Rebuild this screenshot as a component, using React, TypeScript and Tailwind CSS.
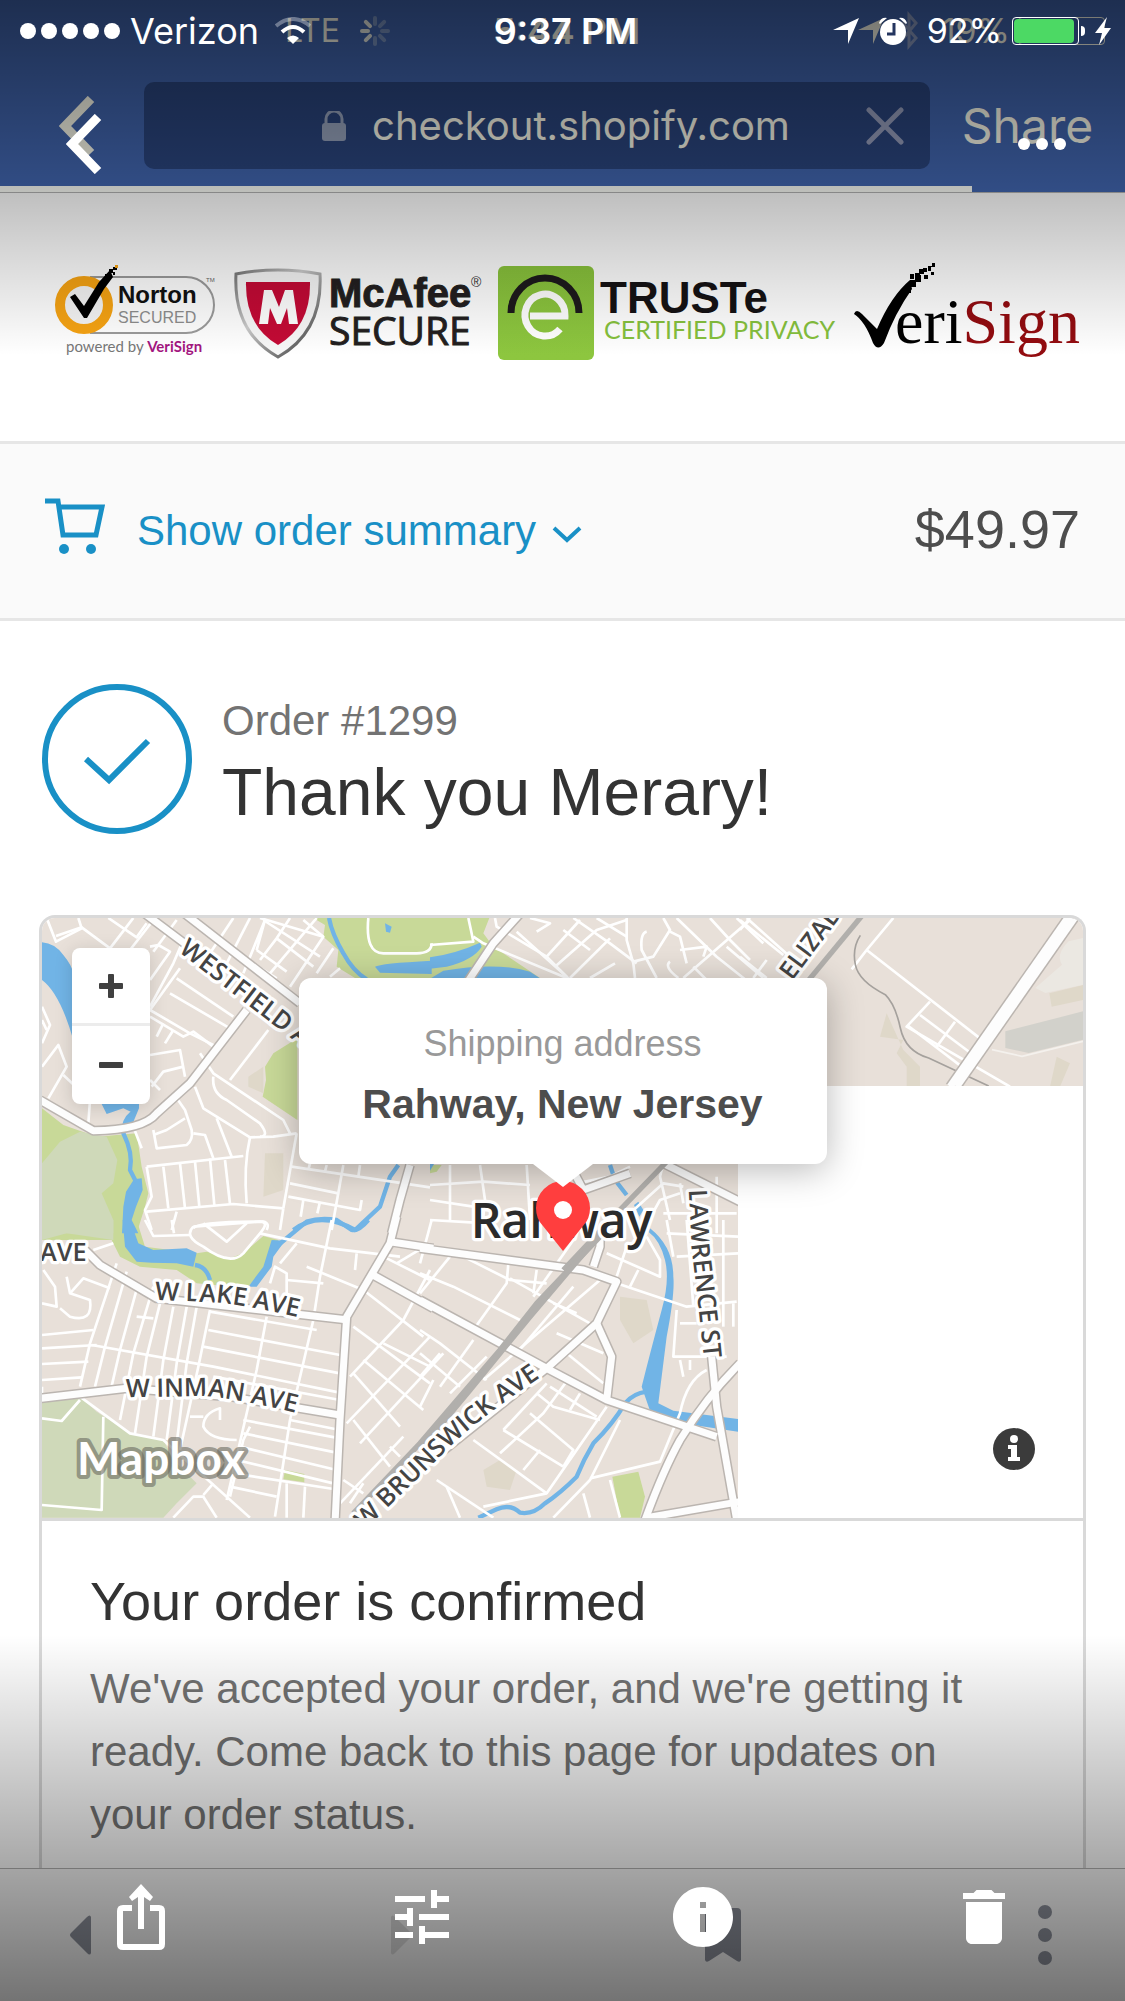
import React, { useState } from 'react';
import { MdDelete, MdInfo, MdTune } from 'react-icons/md';

interface MapArea {
  x: number;
  y: number;
  parks?: string[];
  woods?: string[];
  blocks?: string[];
  water?: string[];
  streams?: string[];
  streets?: string[];
  roads?: string[];
  rails?: string[];
}

// Map geometry, one entry per area; x and y place the area on the map.
const mapAreas: MapArea[] = [
  {
    x: -36,
    y: -54,
    parks: [
      'M850 54L885 75L880 110L925 150L920 200L975 234H1205V54z',
      'M802 415L730 460L705 500L708 540L698 590L802 660z',
      'M36 625L100 675L200 710L320 700L335 800L355 880L345 920L320 1000H36z',
    ],
    woods: ['M36 790L90 725L150 695L230 710L262 780L250 850L215 880L250 960V1000H36z'],
    blocks: ['M655 530L700 500V580L655 560z', 'M705 760H760V870L700 890z'],
    water: [
      'M36 127Q75 130 100 165Q125 195 130 220V420Q90 280 36 240z',
      'M213 608L230 642L280 625L302 635L285 680L300 690L327 625V600z',
      'M312 838L335 835L338 870L318 920L305 960L325 1000H276L280 920L288 875z',
      'M1035 200Q1050 190 1205 182V222L1050 218z',
      'M1065 70L1085 80L1080 98L1068 95z',
    ],
    streams: [
      'M305 640Q280 660 280 700Q310 760 300 810L318 845',
      'M897 54Q905 100 940 160Q970 215 1010 238',
      'M790 990Q870 930 975 990L1050 920L1080 830L1105 795',
    ],
    streets: [
      'M50 54L78 125L155 85L145 54', 'M78 108L155 82L240 145', 'M235 54L320 112L350 70', 'M240 145L310 54',
      'M300 150L370 60', 'M370 155L440 60', 'M360 140L385 135L420 155L360 240', 'M460 120L430 190L360 320',
      'M450 205L360 330L480 400L560 440', 'M440 235L610 350', 'M420 280L600 385', 'M360 350L460 410L490 395L550 440',
      'M400 370L380 410', 'M430 390L405 430', 'M360 465L450 450L465 530', 'M365 560L400 515L460 500', 'M360 540L390 570',
      'M540 160L610 54', 'M590 190L660 54', 'M640 220L705 60L680 150', 'M700 60L870 170', 'M680 150L770 215', 'M660 185L740 235',
      'M720 220L860 54', 'M780 260L880 110L820 60', 'M860 220L910 145', 'M740 115L850 200', 'M690 54L880 110', 'M900 230L930 205',
      'M780 54L740 115L690 180', 'M600 540L715 390', 'M510 460L550 520L760 660L780 700', 'M550 530Q545 580 590 600L690 670Q720 710 690 710',
      'M495 560L520 625L660 712L730 710L800 700', 'M560 655L605 770', 'M350 800L640 768', 'M660 712Q640 800 650 910',
      'M350 935L610 912L760 925', 'M350 800L365 890L345 930L365 990', 'M400 800L415 925', 'M450 790L465 925', 'M495 785L508 920', 'M540 775L553 915', 'M585 780L600 912',
      'M760 925L800 700', 'M440 935L425 990', 'M370 690L380 745L470 735Q490 720 485 690L465 630L430 580', 'M370 705L410 690L465 655', 'M490 700L525 705L550 775',
      'M310 680L335 745', 'M760 925L750 990', 'M785 800L1200 862', 'M780 850L925 880', 'M775 890L990 930L995 900', 'M940 795L905 990', 'M840 790L835 810', 'M890 795L885 815', 'M990 795L985 830', 'M820 900L812 950', 'M870 905L862 940',
      'M490 985Q500 965 700 965Q720 970 710 990', 'M36 320L60 375L36 430', 'M36 500L85 435L110 500L55 595', 'M100 525L180 600L175 670', 'M36 360L50 390',
      'M1015 54Q1005 160 1060 160H1160Q1205 160 1205 130',
    ],
    roads: ['M30 600L190 692Q340 690 380 640L480 550L650 330', 'M330 30L470 135L560 200', 'M450 30L810 310', 'M1140 795L1110 900L1085 1000'],
  },
  {
    x: 1164,
    y: -54,
    parks: ['M0 54H178L160 100L190 140L330 234H0z', 'M0 795H35L20 815L0 820z'],
    water: [
      'M0 172Q80 160 150 128L155 140Q130 180 50 200L0 206z',
      'M0 236L40 212Q200 185 300 215L332 236z',
      'M0 792H12L0 812z',
      'M612 915L625 905L640 930L628 950z',
    ],
    streams: ['M540 795L555 840L590 885'],
    streets: [
      'M115 54Q125 100 130 125L0 135', 'M130 110L160 130L410 234', 'M195 54L200 80L350 170L420 240', 'M260 95L410 230', 'M300 54L360 70L320 95',
      'M430 54L540 130L620 190', 'M350 170L450 60', 'M375 200L500 90L590 60', 'M400 90L480 150', 'M420 234L540 115', 'M590 54V120L610 190L615 234',
      'M500 54L590 110', 'M650 95Q630 100 635 150L680 234', 'M610 185L670 170L720 90L700 54', 'M720 95L750 110L770 190', 'M480 234L555 190', 'M720 185Q700 200 745 234',
      'M740 54L860 170L960 250', 'M750 150L830 140L820 170', 'M760 234L960 60', 'M840 54L900 120L960 180', 'M890 140L1000 234', 'M790 200L830 240', 'M920 54L1000 130',
      'M0 855L160 845L300 855', 'M150 795L165 900L160 950', 'M60 795V960', 'M0 960L135 968', 'M440 850L540 830L600 800', 'M700 790L690 830L720 960',
      'M600 940L700 850L760 860', 'M640 990L690 900L750 880', 'M750 850L760 910', 'M700 940H920', 'M860 830V1000', 'M0 900L130 920', 'M290 795L300 960',
    ],
    roads: ['M280 30L190 130L110 250', 'M420 795L460 870L600 820', 'M700 790L960 920'],
    rails: ['M715 780L560 940L400 1110'],
  },
  {
    x: 2094,
    y: -54,
    blocks: [
      'M440 340L420 410L490 420L470 460L500 500V560H540V500L490 450z',
      'M928 280L1030 255V300L935 320z',
      'M950 470L990 490L960 560H930z',
    ],
    streets: [
      'M0 60L130 165', 'M20 54L150 170', 'M0 170L80 234', 'M0 90L30 54', 'M40 234L80 180', 'M460 54L380 150L335 208',
      'M380 150L720 415', 'M570 305L500 380L810 560', 'M540 345L700 465', 'M505 378L665 500', 'M645 365L590 440',
    ],
    roads: ['M1020 30L650 560', 'M1000 30L630 560'],
    rails: ['M380 30L190 260'],
  },
  {
    x: -36,
    y: 906,
    parks: [
      'M36 0H320L345 80L500 100L530 95L600 115L640 100L700 48L745 60L700 150L650 205L500 190L440 150L330 140L270 110L245 60L36 60z',
      'M765 750L823 762V787L760 778z',
    ],
    woods: ['M36 0H250V60L110 40L36 60z', 'M36 545L155 535L200 575L300 640L400 660L430 720L500 790L440 850L400 893H36z'],
    water: [
      'M278 0H300L325 70L370 90L470 85L500 98L490 140L440 130L365 128L320 125L285 80z',
      'M655 200L700 140L725 60L765 62L730 110L725 140L680 200z',
    ],
    streams: ['M495 135Q530 140 540 180', 'M745 75L830 5Q870 -8 920 0L965 30Q985 35 1015 0'],
    streets: [
      'M345 0L370 48L480 45', 'M425 0L432 40', 'M490 20Q460 50 520 80Q600 140 640 100L690 40Q720 5 690 5L490 20',
      'M520 10L590 65L650 10', 'M690 40L900 85L1110 110', 'M905 0L870 170L850 300L780 600L735 890', 'M750 130L800 70', 'M720 190L735 140L770 160V230',
      'M770 180L880 190', 'M830 140L1000 210L1180 350', 'M980 100L975 150', 'M260 130L180 370L150 500', 'M290 155L225 380L195 500', 'M325 190L270 390L240 520', 'M370 200L310 400L270 600',
      'M390 250L350 410L315 640', 'M430 260L400 420L370 650', 'M470 260L440 430L410 660', 'M500 260L470 430L440 670', 'M540 270L505 440L450 690',
      'M185 375L550 440L940 520', 'M540 275L860 330', 'M535 330L930 405', 'M520 380L930 460', 'M710 290L680 450L590 840', 'M550 470L930 540',
      'M36 345L190 330', 'M36 385L200 375', 'M36 432L175 425', 'M36 480L155 472', 'M36 500V520', 'M320 290L370 295', 'M40 150L75 200L80 260L36 250',
      'M110 170L120 220L180 240Q190 310 120 290L90 265', 'M120 220L160 175L240 205', 'M190 90L250 70', 'M150 530L300 640L400 660L660 893', 'M36 595L95 603L150 540',
      'M220 590L215 870L36 855', 'M640 600L930 655', 'M640 640L930 700', 'M630 680L920 750', 'M620 720L910 790', 'M610 760L930 810', 'M600 800L740 830', 'M770 790L770 893', 'M825 800L820 893',
      'M430 893L490 830L520 830L560 893', 'M520 825L550 790', 'M570 600V565Q520 580 520 620Q540 660 620 660', 'M480 590H520', 'M660 620L640 660L600 830', 'M780 600L930 630',
      'M970 320L1200 490', 'M1000 420L1180 570', 'M970 460L1110 620', 'M970 600L1080 740', 'M960 470L1120 300L1200 150', 'M950 610L1200 350', 'M990 670L1240 400', 'M930 850L1120 650', 'M940 780L1000 820', 'M960 850L1000 790', 'M1080 680L1110 710', 'M1060 110L1200 180', 'M1100 130L1200 70', 'M1060 370L1200 440',
    ],
    roads: ['M165 90L210 135L380 235L560 255L955 300', 'M30 535L290 505L600 530L930 585', 'M1100 -10L1080 70L950 290L930 600L915 910', 'M1080 65L1210 85', 'M1020 160L1210 265'],
  },
  {
    x: 1134,
    y: 906,
    parks: ['M577 770L655 755L675 830L660 893H600z'],
    blocks: ['M190 750L240 720L290 750L270 810L200 800z', 'M600 230L680 240L700 330L640 370L600 300z'],
    water: ['M690 25Q760 80 760 170Q765 220 740 350L715 550L760 572L960 598V636L820 615L690 572L665 500Q690 400 725 270Q750 180 735 120Q720 60 685 35z'],
    streams: ['M680 515Q640 520 615 550Q580 610 520 670Q490 720 470 770Q420 820 375 850Q340 885 300 878Q270 850 230 868L175 893'],
    streets: [
      'M35 0L0 130', 'M0 160L100 200L300 300', 'M90 110L0 220', 'M130 110L270 180L380 190', 'M265 130L260 190L160 330', 'M350 150L340 220',
      'M270 175L510 310', 'M400 250L470 280', 'M460 200L290 400', 'M540 180L190 480', 'M410 340L550 400', 'M440 400L550 490', 'M560 100L720 170L720 120L680 50',
      'M620 80L590 170', 'M655 150L630 200', 'M590 190L800 260L950 245', 'M0 330L60 370L200 480', 'M0 400L120 500', 'M0 470L60 400', 'M60 500L160 360', 'M0 560L40 480', 'M90 520L200 410',
      'M450 470L370 580L240 700', 'M390 500L530 590', 'M380 490L250 630', 'M330 580L460 690L430 740', 'M350 520L400 560L540 600', 'M250 630L430 740', 'M160 660L380 820',
      'M560 560L380 820L190 860', 'M310 750L360 690', 'M480 520L450 570', 'M600 600L510 780L400 893', 'M510 775L720 725L780 580Q800 480 860 450', 'M570 780L600 893',
      'M50 780L220 893', 'M80 800L120 893', 'M490 820L510 893', 'M770 270L760 410H920', 'M780 310H830', 'M780 420L790 470', 'M810 420V450', 'M740 0L760 110', 'M740 40L954 50', 'M770 110L954 100', 'M800 0L820 260', 'M910 0V320', 'M940 250V320', 'M340 230L460 60',
    ],
    roads: [
      'M0 85L490 150L590 185L530 310L380 445L60 700', 'M520 140L540 80V30', 'M530 310L575 410L560 540', 'M0 240L380 445L560 540L890 650',
      'M875 410L890 560L950 900', 'M960 430Q860 530 780 660Q730 750 675 900', 'M680 893L960 845',
    ],
    rails: ['M540 50L350 250L240 390L0 670L-200 880', 'M500 90L330 290L150 510L0 690'],
  },
];

type Layer = 'parks' | 'woods' | 'blocks' | 'water' | 'streams' | 'streets' | 'roads' | 'rails';

const MapLayer = ({ layer, ...props }: { layer: Layer } & Omit<React.SVGProps<SVGGElement>, 'ref'>) => (
  <g {...props}>
    {mapAreas.map((area, i) => (
      <g key={i} transform={`translate(${area.x} ${area.y})`}>
        {area[layer]?.map((d) => <path key={d} d={d} />)}
      </g>
    ))}
  </g>
);

const StreetMap = () => (
  <svg viewBox="0 0 3123 1800" preserveAspectRatio="xMidYMid slice" className="block h-[600px] w-full" aria-label="Map of Rahway">
    <defs>
      <clipPath id="loaded"><path d="M0 0H3123V504H2088V1800H0z" /></clipPath>
      <path id="westfield" d="M408 100L740 355L850 440" />
      <path id="lake" d="M338 1145L530 1154Q640 1165 840 1215" />
      <path id="inman" d="M252 1438L480 1434Q620 1445 840 1505" />
      <path id="brunswick" d="M968 1836L1180 1630Q1300 1500 1580 1322" />
      <path id="lawrence" d="M1940 815L1950 1000Q1975 1200 1997 1440" />
      <path id="elizabeth" d="M2250 190L2430 -50" />
    </defs>
    <g clipPath="url(#loaded)" strokeLinejoin="round">
      <rect width="3123" height="1800" fill="#e8e0d9" />
      <MapLayer layer="parks" fill="#c8d998" />
      <MapLayer layer="woods" fill="#cfd9b9" />
      <MapLayer layer="blocks" fill="#dfd8c9" />
      <path d="M3080 70Q3040 110 3060 140L2980 210L3010 225L3123 200V60z" fill="#ebe8e2" />
      <path d="M2890 340L3123 280V365L2960 405L2890 390z" fill="#d2d1cb" />
      <path d="M2850 395L2940 415L3123 370" fill="none" stroke="#f4f1ed" strokeWidth="5" />
      <MapLayer layer="water" fill="#71b4e6" />
      <MapLayer layer="streams" fill="none" stroke="#71b4e6" strokeWidth="13" />
      <MapLayer layer="streets" fill="none" stroke="#fff" strokeWidth="8" />
      <path d="M2455 52Q2430 90 2440 140T2530 230Q2560 260 2575 330T2660 420L2840 504" fill="none" stroke="#a5a19d" strokeWidth="5" />
      <MapLayer layer="roads" fill="none" stroke="#bbb5b0" strokeWidth="30" />
      <MapLayer layer="roads" fill="none" stroke="#fdfdfd" strokeWidth="21" />
      <MapLayer layer="rails" fill="none" stroke="#b1afac" strokeWidth="16" />
      <g className="font-['Open_Sans',sans-serif] font-semibold" fontSize="76" fill="#444" stroke="#fff" strokeWidth="20" paintOrder="stroke">
        <text><textPath href="#westfield">WESTFIELD AVE</textPath></text>
        <text><textPath href="#lake">W LAKE AVE</textPath></text>
        <text><textPath href="#inman">W INMAN AVE</textPath></text>
        <text><textPath href="#brunswick">W BRUNSWICK AVE</textPath></text>
        <text><textPath href="#lawrence">LAWRENCE ST</textPath></text>
        <text><textPath href="#elizabeth">ELIZABETH</textPath></text>
        <text x="-6" y="1028">AVE</text>
        <text x="1286" y="961" fontSize="144" fill="#2b2b2b">Rahway</text>
      </g>
    </g>
  </svg>
);

const NortonBadge = () => (
  <svg viewBox="54 260 168 104" className="h-[104px]" aria-label="Norton Secured">
    <path d="M90 277H186A28 28 0 0 1 186 333H90" fill="none" stroke="#9b9b9b" strokeWidth="2" />
    <circle cx="84" cy="305" r="24" fill="#f4f4f4" stroke="#f6a313" strokeWidth="10" />
    <path d="M70 297L75 294L84 306L99 282L110 270L113 277L104 289L87 318H84z" />
    <path d="M105 274h4v4h-4zM109 269h4v4h-4zM113 272h2v3h-2zM113 267h4v3h-4z" />
    <path d="M115 265h3v3h-3z" fill="#f6a313" />
    <text x="118" y="303" className="font-['Liberation_Sans',sans-serif] font-bold" fontSize="24" fill="#111">Norton</text>
    <text x="118" y="323" className="font-['Liberation_Sans',sans-serif]" fontSize="16" fill="#8d8d8d">SECURED</text>
    <text x="206" y="282" className="font-['Liberation_Sans',sans-serif]" fontSize="6" fill="#666">TM</text>
    <text x="66" y="352" className="font-['Lato',sans-serif]" fontSize="15" fill="#777">
      powered by <tspan fill="#a3157f" className="font-bold">VeriSign</tspan>
    </text>
  </svg>
);

const McAfeeBadge = () => (
  <svg viewBox="236 260 250 104" className="h-[104px]" aria-label="McAfee Secure">
    <defs>
      <linearGradient id="steel" x1="0" x2="1" y1="0" y2="1">
        <stop offset="0" stopColor="#777" />
        <stop offset=".4" stopColor="#ccc" />
        <stop offset="1" stopColor="#333" />
      </linearGradient>
    </defs>
    <path d="M238 274Q280 266 322 274Q325 332 280 357Q235 332 238 274z" fill="#f7f7f7" stroke="url(#steel)" strokeWidth="3" />
    <path d="M248 282H312Q313 326 280 345Q247 326 248 282z" fill="#c40a35" />
    <path d="M261 324L266 290H274L281 307L287 290H295L300 324H291L289 308L283 324H279L272 308L270 324z" fill="#fff" />
    <text x="331" y="307" className="font-['Liberation_Sans',sans-serif] font-bold" fontSize="40" fill="#231f20" stroke="#231f20">McAfee</text>
    <text x="331" y="345" className="font-['Open_Sans',sans-serif]" fontSize="39" fill="#231f20" stroke="#231f20">SECURE</text>
    <text x="473" y="287" className="font-['Liberation_Sans',sans-serif]" fontSize="14" fill="#333">®</text>
  </svg>
);

const TrusteBadge = () => (
  <svg viewBox="496 260 344 104" className="h-[104px]" aria-label="TRUSTe Certified Privacy">
    <defs>
      <linearGradient id="leaf" x2="0" y2="1">
        <stop stopColor="#8ac43c" />
        <stop offset="1" stopColor="#8dc63f" />
      </linearGradient>
    </defs>
    <rect x="497" y="266" width="96" height="94" rx="6" fill="url(#leaf)" />
    <path d="M510 313A34 35 0 0 1 578 313" fill="none" stroke="#1d1a1c" strokeWidth="7" />
    <path d="M529 316H564A20 21 0 1 0 559 329" fill="none" stroke="#fff" strokeWidth="7" />
    <text x="599" y="313" className="font-['Liberation_Sans',sans-serif] font-bold" fontSize="44" fill="#151214">TRUSTe</text>
    <text x="603" y="339" className="font-['Lato',sans-serif]" fontSize="25" fill="#86c13d">CERTIFIED PRIVACY</text>
  </svg>
);

const VeriSignBadge = () => (
  <svg viewBox="854 260 228 104" className="h-[104px]" aria-label="VeriSign">
    <path d="M855 314Q857 308 863 314L878 329Q892 296 911 280L913 289Q896 313 885 343Q879 352 874 343Q866 321 855 314z" />
    <path d="M905 286h6v-6h5v-5h6v7h-5v5h-5v6h-6zM907 279h4v-5h4v5zM916 273h4v-4h5v5h-4v4h-5zM924 268h4v4h-4zM925 279h4v-4h-4zM929 266h4v-3h3v4h-4v4h-3zM932 272h3v3h-3z" />
    <text x="896" y="343" className="font-['Liberation_Serif',serif]" fontSize="64">
      eri<tspan fill="#930c10">Sign</tspan>
    </text>
  </svg>
);

const BackChevron = () => (
  <svg viewBox="0 0 36 60" className="h-[60px] w-9" fill="none" stroke="currentColor" strokeWidth="9">
    <path d="M32 3L6 30L32 57" />
  </svg>
);

const LocationArrow = () => (
  <svg viewBox="0 0 26 26" className="size-[26px]" fill="currentColor"><path d="M26 0L15 26V12H0z" /></svg>
);

// The browser that the page was opened in
const BrowserHeader = () => (
  <header className="bg-[#4267b2] text-[#fffff0] font-['Inter',sans-serif]">
    <div className="grid grid-cols-[1fr_auto_1fr] items-center h-[62px] pl-5 pr-3 text-4xl">
      <div className="flex items-center gap-5 pl-[265px] text-[32px]">
        <span>LTE</span>
        <svg viewBox="0 0 30 30" className="size-[30px]" stroke="currentColor" strokeWidth="4" strokeLinecap="round">
          {[0, 45, 90, 135, 180, 225, 270, 315].map((turn) => (
            <path key={turn} d="M15 2V8" transform={`rotate(${turn} 15 15)`} opacity={turn > 200 ? 0.9 : 0.3} />
          ))}
        </svg>
      </div>
      <span className="font-semibold">5:44 PM</span>
      <div className="flex items-center justify-end text-[34px]">
        <LocationArrow />
        <svg viewBox="0 0 18 40" className="w-[18px] h-10 ml-4 mr-6" fill="none" stroke="#8d9dc4" strokeWidth="3">
          <path d="M2 11L16 27L9 35V4L16 12L2 29" />
        </svg>
        <span>19%</span>
        <span className="w-[87px] h-7 mx-2 border border-current rounded" />
      </div>
    </div>
    <div className="flex items-center pt-5 pb-[17px]">
      <button className="w-36 shrink-0 pl-[59px]" aria-label="Back in browser"><BackChevron /></button>
      <div className="flex flex-1 items-center h-[87px] pl-[102px] pr-[26px] rounded-[10px] bg-[#2b4680]">
        <div className="flex flex-1 items-center justify-center gap-[26px]">
          <svg viewBox="0 0 24 30" className="w-6 h-[30px] text-[#9ba8c2]" fill="currentColor">
            <path d="M4 13V8a8 8 0 0 1 16 0v5" fill="none" stroke="currentColor" strokeWidth="3" />
            <rect y="12" width="24" height="18" rx="3" />
          </svg>
          <span className="text-[40px] leading-none">checkout.shopify.com</span>
        </div>
        <button aria-label="Stop loading">
          <svg viewBox="0 0 38 38" className="size-[38px]" stroke="#9ba3c2" strokeWidth="5" strokeLinecap="round"><path d="M3 3L35 35M35 3L3 35" /></svg>
        </button>
      </div>
      <button className="w-[195px] shrink-0 text-5xl leading-none">Share</button>
    </div>
    <div className="h-1.5 w-[86.4%] bg-[#fdfff9]" />
    <div className="h-px bg-[#b5b5b5]" />
  </header>
);

const BrowserToolbar = () => (
  <nav className="flex items-center justify-between h-[133px] px-14 border-t border-[#b4b4b4] bg-[#fbfbfb] text-[#8e929d]">
    <button className="flex justify-center w-12" aria-label="Previous page">
      <svg viewBox="0 0 21 40" className="w-[21px] h-10" fill="currentColor"><path d="M21 2V38Q20 41 17 38L1 22Q-1 20 1 18L17 2Q20-1 21 2z" /></svg>
    </button>
    <button className="flex justify-center w-12 text-[#dedede]" aria-label="Next page">
      <svg viewBox="0 0 21 40" className="w-[21px] h-10" fill="currentColor"><path d="M0 2V38Q1 41 4 38L20 22Q22 20 20 18L4 2Q1-1 0 2z" /></svg>
    </button>
    <button className="flex justify-center w-12" aria-label="Save page">
      <svg viewBox="0 0 36 54" className="w-9 h-[54px]" fill="currentColor"><path d="M0 4Q0 0 4 0H32Q36 0 36 4V52Q35 55 32 53L18 44L4 53Q1 55 0 52z" /></svg>
    </button>
    <button className="flex justify-center w-12" aria-label="Menu">
      <svg viewBox="0 0 14 60" className="w-3.5 h-[60px]" fill="currentColor"><circle cx="7" cy="7" r="7" /><circle cx="7" cy="30" r="7" /><circle cx="7" cy="53" r="7" /></svg>
    </button>
  </nav>
);

const TrustBadges = () => (
  <div className="flex items-center justify-between pl-[54px] pr-11 pt-[67px] pb-[77px] border-b-[3px] border-[#e6e6e6]">
    <NortonBadge />
    <McAfeeBadge />
    <TrusteBadge />
    <VeriSignBadge />
  </div>
);

const OrderSummaryBar = () => {
  const [open, setOpen] = useState(false);

  return (
    <div className="flex items-center justify-between h-[177px] px-[45px] bg-[#fafafa] border-b-[3px] border-[#e6e6e6]">
      <button onClick={() => setOpen(!open)} aria-expanded={open} className="flex items-center gap-8 text-[42px] leading-none text-[#1990c6]">
        <svg viewBox="0 0 60 58" className="w-[60px] h-[58px] -mt-2" fill="none" stroke="currentColor" strokeWidth="5">
          <path d="M0 3H13L18 37H51L57 9H14" />
          <circle cx="19" cy="51" r="5" fill="currentColor" stroke="none" />
          <circle cx="46" cy="51" r="5" fill="currentColor" stroke="none" />
        </svg>
        <span className="flex items-center gap-4">
          Show order summary
          <svg viewBox="0 0 30 18" className="w-[30px] h-[18px] mt-2" fill="none" stroke="currentColor" strokeWidth="4"><path d="M2 2L15 14L28 2" /></svg>
        </span>
      </button>
      <span className="-mt-1 text-[54px] leading-none text-[#4d4d4d]">$49.97</span>
    </div>
  );
};

const ShippingMap = () => (
  <div className="relative border-b-[3px] border-[#d9d9d9]">
    <StreetMap />
    <div className="absolute left-[30px] top-[30px] w-[78px] rounded-lg bg-white text-[#404040] shadow-[0_3px_18px_rgba(0,0,0,0.15)]">
      <button className="flex items-center justify-center w-full h-[78px] border-b-[3px] border-[#ececec]" aria-label="Zoom in">
        <svg viewBox="0 0 24 24" className="size-6" fill="currentColor"><rect y="9" width="24" height="6" rx="1" /><rect x="9" width="6" height="24" rx="1" /></svg>
      </button>
      <button className="flex items-center justify-center w-full h-[78px]" aria-label="Zoom out">
        <svg viewBox="0 0 24 24" className="size-6" fill="currentColor"><rect y="9" width="24" height="6" rx="1" /></svg>
      </button>
    </div>
    <div className="absolute left-1/2 top-[60px] flex flex-col items-center -translate-x-1/2">
      <div className="w-[528px] h-[186px] pt-9 rounded-xl bg-white text-center shadow-[0_6px_36px_rgba(0,0,0,0.28)]">
        <p className="text-4xl leading-[60px] text-[#999]">Shipping address</p>
        <p className="text-[41px] leading-[60px] font-bold text-[#4d4d4d]">Rahway, New Jersey</p>
      </div>
      <svg viewBox="0 0 60 90" className="relative w-[60px] h-[90px]">
        <path d="M30 87L10 62Q3 55 3 44A27 27 0 0 1 57 44Q57 55 50 62z" fill="#ff3e3e" />
        <circle cx="30" cy="46" r="9" fill="#fff" />
        <path d="M0 0H60L30 23z" fill="#fff" />
      </svg>
    </div>
    <a href="#mapbox" className="absolute left-[30px] bottom-[26px]" aria-label="Mapbox">
      <svg viewBox="0 0 190 62" className="w-[190px] h-[62px]">
        <text x="5" y="45" className="font-['Lato',sans-serif] font-bold" fontSize="46" fill="#fff" stroke="#6b6b60" strokeOpacity=".6" strokeWidth="8" strokeLinejoin="round" paintOrder="stroke">Mapbox</text>
      </svg>
    </a>
    <button className="absolute right-12 bottom-12" aria-label="Map credits">
      <svg viewBox="0 0 42 42" className="size-[42px]" fill="#fff">
        <circle cx="21" cy="21" r="21" fill="#3b3b3b" />
        <circle cx="21" cy="11" r="4" />
        <path d="M15 17H24V29H27V33H15V29H18V21H15z" />
      </svg>
    </button>
  </div>
);

const SignalDots = () => (
  <svg viewBox="0 0 100 16" className="w-[100px] h-4" fill="currentColor">
    {[8, 29, 50, 71, 92].map((x) => <circle key={x} cx={x} cy="8" r="8" />)}
  </svg>
);

// Photo viewer controls that float above the page
const ViewerControls = () => (
  <div className="absolute inset-0 flex flex-col justify-between text-white">
    <div>
      <div className="grid grid-cols-[1fr_auto_1fr] items-center h-[62px] pl-5 pr-3.5 text-4xl font-['Inter',sans-serif]">
        <div className="flex items-center">
          <SignalDots />
          <span className="ml-2.5">Verizon</span>
          <svg viewBox="0 0 36 28" className="w-9 h-7 ml-4" fill="none" stroke="currentColor" strokeWidth="4">
            <path d="M1 9Q18-5 35 9" opacity=".35" />
            <path d="M7 15Q18 5 29 15" />
            <path d="M12 21Q18 16 24 21L18 27z" fill="currentColor" stroke="none" />
          </svg>
        </div>
        <span className="font-semibold">9:37 PM</span>
        <div className="flex items-center justify-end text-[34px]">
          <LocationArrow />
          <svg viewBox="0 0 28 28" className="size-7 ml-5 mr-5" fill="currentColor">
            <circle cx="14" cy="15" r="13" />
            <path d="M0 6Q2 0 8 1L1 7zM28 6Q26 0 20 1L27 7z" />
            <path d="M15 6V17H8" fill="none" stroke="#24355f" strokeWidth="3" />
          </svg>
          <span>92%</span>
          <span className="w-[67px] h-7 ml-2.5 p-px pr-1 border border-current rounded"><span className="block h-full rounded-sm bg-[#4cd964]" /></span>
          <span className="w-1 h-2.5 ml-0.5 rounded-r bg-white" />
          <svg viewBox="0 0 16 28" className="w-4 h-7 ml-2.5" fill="currentColor"><path d="M12 0L0 16H7L4 28L16 11H9z" /></svg>
        </div>
      </div>
      <div className="flex items-center justify-between h-[84px] mt-10 pl-[66px] pr-[59px]">
        <button aria-label="Back"><BackChevron /></button>
        <button aria-label="More options">
          <svg viewBox="0 0 48 12" className="w-12 h-3" fill="currentColor"><circle cx="6" cy="6" r="6" /><circle cx="24" cy="6" r="6" /><circle cx="42" cy="6" r="6" /></svg>
        </button>
      </div>
    </div>
    <nav className="grid grid-cols-4 items-center justify-items-center h-[133px] pb-9">
      <button aria-label="Share photo">
        <svg viewBox="0 0 48 66" className="w-12 h-[66px]" fill="none" stroke="currentColor" strokeWidth="6">
          <path d="M15 24H6Q3 24 3 27V60Q3 63 6 63H42Q45 63 45 60V27Q45 24 42 24H33" />
          <path d="M24 45V10" />
          <path d="M24 0L36 13L33 17L24 11L15 17L12 13z" fill="currentColor" stroke="none" />
        </svg>
      </button>
      <button aria-label="Edit"><MdTune size={72} /></button>
      <button aria-label="Info"><MdInfo size={72} /></button>
      <button aria-label="Delete"><MdDelete size={72} /></button>
    </nav>
  </div>
);

export default function App() {
  return (
    <div className="relative flex flex-col min-h-screen bg-white font-['Liberation_Sans',sans-serif]">
      <BrowserHeader />
      <TrustBadges />
      <OrderSummaryBar />
      <main className="flex flex-1 flex-col px-[39px] pt-[63px]">
        <div className="flex items-end gap-[30px] pl-[3px]">
          <svg viewBox="0 0 150 150" className="size-[150px]" fill="none" stroke="#1990c6" strokeWidth="6">
            <circle cx="75" cy="75" r="72" />
            <path d="M44 75L67 96L106 57" />
          </svg>
          <div>
            <p className="text-[42px] leading-[58px] text-[#737373]">Order #1299</p>
            <h1 className="text-[66px] leading-[84px] text-[#333]">Thank you Merary!</h1>
          </div>
        </div>
        <section className="flex-1 mt-[81px] border-[3px] border-b-0 border-[#d9d9d9] rounded-t-2xl overflow-hidden">
          <ShippingMap />
          <div className="pl-12 pr-24 pt-10">
            <h2 className="text-[54px] leading-[80px] text-[#333]">Your order is confirmed</h2>
            <p className="mt-4 text-[42px] leading-[63px] text-[#737373]">
              We've accepted your order, and we're getting it ready. Come back to this page for updates on your order status.
            </p>
          </div>
        </section>
      </main>
      <BrowserToolbar />
      <div className="absolute inset-x-0 top-0 h-[355px] bg-linear-to-b from-black/55 to-transparent pointer-events-none" />
      <div className="absolute inset-x-0 bottom-0 h-[366px] bg-linear-to-t from-black/54 to-transparent pointer-events-none" />
      <ViewerControls />
    </div>
  );
}
